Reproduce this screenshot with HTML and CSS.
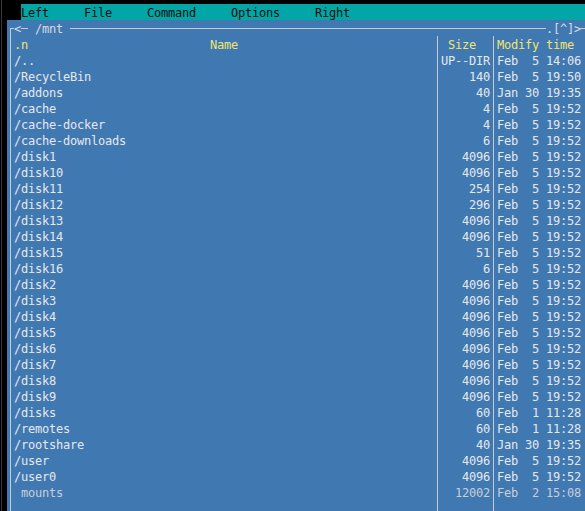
FILE: index.html
```html
<!DOCTYPE html>
<html lang="en">
<head>
    <meta charset="UTF-8">
    <title>mc - /mnt</title>
    <link rel="stylesheet" href="styles.css">
</head>
<body>
    <div class="screen">
        <!-- Menu bar -->
        <div class="menu">
            <span>Left</span>
            <span>File</span>
            <span>Command</span>
            <span>Options</span>
            <span>Right</span>
        </div>

        <!-- Left panel -->
        <div class="panel">
            <div class="title">
                <span class="corner"></span><span>&lt;</span><span class="dash"></span><span> /mnt </span><span class="rule"></span><span>.[^]&gt;</span><span class="corner-r"></span>
            </div>
            <div class="list">
                <div class="row head">
                    <span class="name"><span>.n</span><span class="label">Name</span></span>
                    <span class="size">Size</span>
                    <span class="time">Modify time</span>
                </div>
                <div class="row"><span class="name">/..</span><span class="size">UP--DIR</span><span class="time">Feb  5 14:06</span></div>
                <div class="row"><span class="name">/RecycleBin</span><span class="size">140</span><span class="time">Feb  5 19:50</span></div>
                <div class="row"><span class="name">/addons</span><span class="size">40</span><span class="time">Jan 30 19:35</span></div>
                <div class="row"><span class="name">/cache</span><span class="size">4</span><span class="time">Feb  5 19:52</span></div>
                <div class="row"><span class="name">/cache-docker</span><span class="size">4</span><span class="time">Feb  5 19:52</span></div>
                <div class="row"><span class="name">/cache-downloads</span><span class="size">6</span><span class="time">Feb  5 19:52</span></div>
                <div class="row"><span class="name">/disk1</span><span class="size">4096</span><span class="time">Feb  5 19:52</span></div>
                <div class="row"><span class="name">/disk10</span><span class="size">4096</span><span class="time">Feb  5 19:52</span></div>
                <div class="row"><span class="name">/disk11</span><span class="size">254</span><span class="time">Feb  5 19:52</span></div>
                <div class="row"><span class="name">/disk12</span><span class="size">296</span><span class="time">Feb  5 19:52</span></div>
                <div class="row"><span class="name">/disk13</span><span class="size">4096</span><span class="time">Feb  5 19:52</span></div>
                <div class="row"><span class="name">/disk14</span><span class="size">4096</span><span class="time">Feb  5 19:52</span></div>
                <div class="row"><span class="name">/disk15</span><span class="size">51</span><span class="time">Feb  5 19:52</span></div>
                <div class="row"><span class="name">/disk16</span><span class="size">6</span><span class="time">Feb  5 19:52</span></div>
                <div class="row"><span class="name">/disk2</span><span class="size">4096</span><span class="time">Feb  5 19:52</span></div>
                <div class="row"><span class="name">/disk3</span><span class="size">4096</span><span class="time">Feb  5 19:52</span></div>
                <div class="row"><span class="name">/disk4</span><span class="size">4096</span><span class="time">Feb  5 19:52</span></div>
                <div class="row"><span class="name">/disk5</span><span class="size">4096</span><span class="time">Feb  5 19:52</span></div>
                <div class="row"><span class="name">/disk6</span><span class="size">4096</span><span class="time">Feb  5 19:52</span></div>
                <div class="row"><span class="name">/disk7</span><span class="size">4096</span><span class="time">Feb  5 19:52</span></div>
                <div class="row"><span class="name">/disk8</span><span class="size">4096</span><span class="time">Feb  5 19:52</span></div>
                <div class="row"><span class="name">/disk9</span><span class="size">4096</span><span class="time">Feb  5 19:52</span></div>
                <div class="row"><span class="name">/disks</span><span class="size">60</span><span class="time">Feb  1 11:28</span></div>
                <div class="row"><span class="name">/remotes</span><span class="size">60</span><span class="time">Feb  1 11:28</span></div>
                <div class="row"><span class="name">/rootshare</span><span class="size">40</span><span class="time">Jan 30 19:35</span></div>
                <div class="row"><span class="name">/user</span><span class="size">4096</span><span class="time">Feb  5 19:52</span></div>
                <div class="row"><span class="name">/user0</span><span class="size">4096</span><span class="time">Feb  5 19:52</span></div>
                <div class="row file"><span class="name"> mounts</span><span class="size">12002</span><span class="time">Feb  2 15:08</span></div>
                <div class="row"></div>
            </div>
        </div>
    </div>
</body>
</html>
```

FILE: styles.css
```css
* {
    margin: 0;
    padding: 0;
    box-sizing: border-box;
}

html, body {
    height: 100%;
    overflow: hidden;
}

body {
    background: linear-gradient(to right, #000 1px, #3a3a3a 1px, #3a3a3a 2px, #000 2px);
    font-family: "DejaVu Sans Mono", monospace;
    font-size: 12px;
    letter-spacing: -0.224px;
    line-height: 16px;
}

.screen {
    display: flex;
    flex-direction: column;
    height: 100%;
    padding: 4px 0 0 7px;
}

/* top menu */
.menu {
    display: flex;
    gap: 35px;
    height: 16px;
    padding-top: 1px;
    margin-left: 14px;
    background: #02a6a6;
    color: #101010;
    white-space: pre;
}

/* panel */
.panel {
    --line: #c6cbd2;
    flex: 1;
    background: #4078b2;
    color: #e6e8ec;
    overflow: hidden;
}

.title {
    display: flex;
    width: 581px;
    height: 16px;
    padding-top: 1px;
    white-space: pre;
    color: #d8dce2;
}

.corner {
    width: 7px;
    background:
        linear-gradient(var(--line), var(--line)) 3px 7px / 1px 9px no-repeat,
        linear-gradient(var(--line), var(--line)) 3px 7px / 4px 1px no-repeat;
}

.corner-r {
    width: 7px;
    background: linear-gradient(var(--line), var(--line)) 0 7px / 4px 1px no-repeat;
}

.dash {
    width: 7px;
    background: linear-gradient(var(--line), var(--line)) 0 7px / 100% 1px no-repeat;
}

.rule {
    flex: 1;
    background: linear-gradient(var(--line), var(--line)) 0 7px / 100% 1px no-repeat;
}

.list {
    width: 581px;
    background:
        linear-gradient(var(--line), var(--line)) 3px 0 / 1px 100% no-repeat,
        linear-gradient(var(--line), var(--line)) 430px 0 / 1px 100% no-repeat,
        linear-gradient(var(--line), var(--line)) 486px 0 / 1px 100% no-repeat;
}

.row {
    display: grid;
    grid-template-columns: 7px 420px 7px 49px 7px 84px;
    height: 16px;
    padding-top: 1px;
    white-space: pre;
}

.name { grid-column: 2; overflow: hidden; }
.size { grid-column: 4; text-align: right; }
.time { grid-column: 6; }

.head {
    color: #f2e66a;
}

.head .label {
    margin-left: 182px;
}

.head .size {
    text-align: left;
    padding-left: 7px;
}

.file {
    color: #c9ced6;
}
```
